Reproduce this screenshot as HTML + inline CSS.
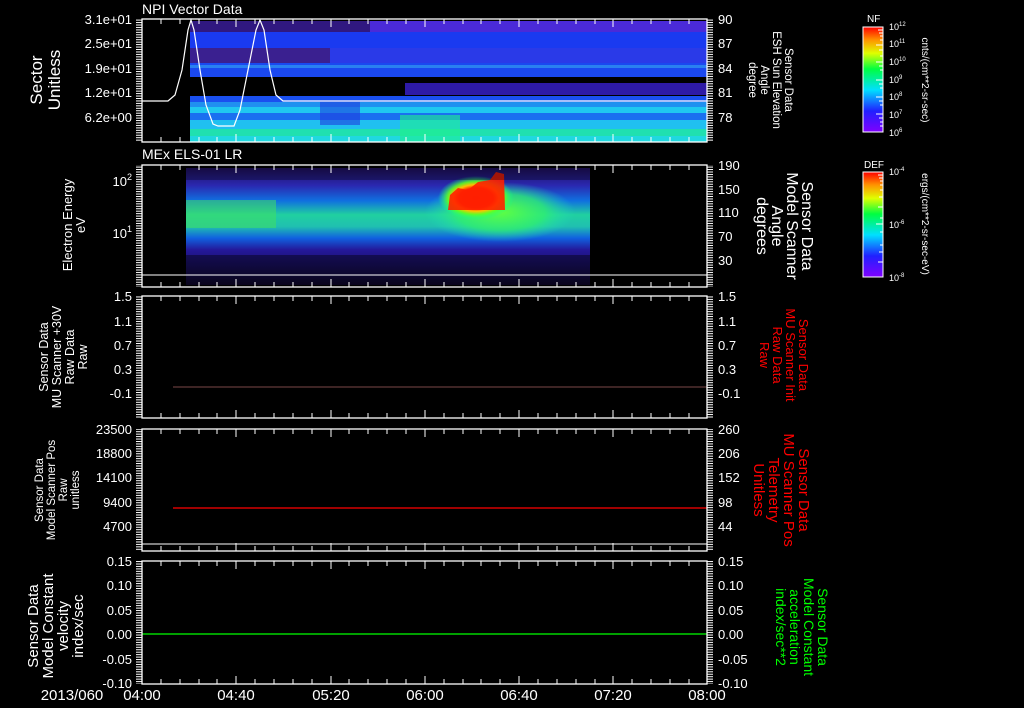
<!DOCTYPE html>
<html><head><meta charset="utf-8"><style>
html,body{margin:0;padding:0;background:#000;}
svg{display:block;font-family:"Liberation Sans",sans-serif;}
</style></head><body>
<svg width="1024" height="708" viewBox="0 0 1024 708" xmlns="http://www.w3.org/2000/svg">
<defs>
<pattern id="mtL" width="6" height="2.45" patternUnits="userSpaceOnUse"><rect x="0" y="0" width="6" height="1" fill="#fff"/></pattern>
<linearGradient id="rainbow" x1="0" y1="1" x2="0" y2="0">
<stop offset="0" stop-color="#8000ff"/><stop offset="0.2" stop-color="#2020ff"/><stop offset="0.4" stop-color="#00e0ff"/><stop offset="0.6" stop-color="#00ff40"/><stop offset="0.75" stop-color="#e0ff00"/><stop offset="0.88" stop-color="#ff9000"/><stop offset="1" stop-color="#ff0000"/>
</linearGradient>
<linearGradient id="p2v" x1="0" y1="0" x2="0" y2="1">
<stop offset="0" stop-color="#201060"/><stop offset="0.15" stop-color="#2a28b0"/><stop offset="0.28" stop-color="#1070e0"/><stop offset="0.4" stop-color="#20d0a0"/><stop offset="0.5" stop-color="#20c0b0"/><stop offset="0.6" stop-color="#1060e0"/><stop offset="0.7" stop-color="#24189a"/><stop offset="1" stop-color="#100830"/>
</linearGradient>
<radialGradient id="hot" cx="0.5" cy="0.5" r="0.5">
<stop offset="0" stop-color="#ff1000"/><stop offset="0.45" stop-color="#ff2000"/><stop offset="0.6" stop-color="#ffc000"/><stop offset="0.75" stop-color="#60ff20" stop-opacity="0.9"/><stop offset="1" stop-color="#00ffa0" stop-opacity="0"/>
</radialGradient>
<radialGradient id="grn" cx="0.5" cy="0.5" r="0.5">
<stop offset="0" stop-color="#60ff40"/><stop offset="0.6" stop-color="#30f070" stop-opacity="0.8"/><stop offset="1" stop-color="#20e0c0" stop-opacity="0"/>
</radialGradient>
</defs>

<!-- Panel 1 spectrogram -->
<g>
<rect x="190" y="21" width="517" height="11" fill="#4a2ad8"/>
<rect x="190" y="21" width="180" height="11" fill="#301880"/>
<rect x="190" y="32" width="517" height="16" fill="#1a3af0"/>
<rect x="190" y="48" width="517" height="15" fill="#2a3ae8"/>
<rect x="190" y="48" width="140" height="15" fill="#3a2090"/>
<rect x="190" y="63" width="517" height="14" fill="#1a48f0"/>
<rect x="190" y="65" width="517" height="3" fill="#2a80f0"/>
<rect x="405" y="83" width="302" height="12" fill="#3a20d0" opacity="0.8"/>
<rect x="190" y="96" width="517" height="6" fill="#1a50f0"/>
<rect x="190" y="102" width="517" height="5" fill="#2090f0"/>
<rect x="190" y="107" width="517" height="6" fill="#20c8f0"/>
<rect x="190" y="113" width="517" height="7" fill="#1a70f0"/>
<rect x="190" y="120" width="517" height="9" fill="#20c0f0"/>
<rect x="190" y="129" width="517" height="7" fill="#20e0b0"/>
<rect x="190" y="136" width="517" height="6" fill="#20d8e0"/>
<rect x="320" y="100" width="40" height="25" fill="#2040e0" opacity="0.6"/>
<rect x="400" y="115" width="60" height="27" fill="#20f090" opacity="0.6"/>
<polyline fill="none" stroke="#fff" stroke-width="1.2" points="142,101 168,101 175,95 182,70 188,30 191,20 194,30 200,70 206,105 213,124 218,126 234,126 240,110 248,70 256,30 260,20 264,30 270,70 276,95 283,101 707,101"/>
</g>

<!-- Panel 2 spectrogram -->
<g>
<rect x="186" y="168" width="404" height="117" fill="url(#p2v)"/>
<rect x="186" y="200" width="90" height="28" fill="#40e060" opacity="0.55"/>
<ellipse cx="500" cy="212" rx="75" ry="30" fill="url(#grn)"/>
<ellipse cx="476" cy="198" rx="38" ry="22" fill="url(#hot)"/>
<polygon points="448,210 450,195 458,188 468,190 478,182 490,180 496,172 504,174 505,210" fill="#ff2000" opacity="0.9"/>
<rect x="186" y="255" width="404" height="30" fill="#000" opacity="0.4"/>
<rect x="186" y="168" width="404" height="12" fill="#000" opacity="0.3"/>
<line x1="142" y1="275" x2="707" y2="275" stroke="#fff" stroke-width="1"/>
</g>

<!-- data lines -->
<line x1="173" y1="387" x2="707" y2="387" stroke="#7a4848" stroke-width="1"/>
<line x1="173" y1="508" x2="707" y2="508" stroke="#ff0000" stroke-width="1.3"/>
<line x1="142" y1="634" x2="707" y2="634" stroke="#00ff00" stroke-width="1.3"/>
<line x1="142" y1="544" x2="707" y2="544" stroke="#fff" stroke-width="1"/>

<!-- frames -->
<g fill="none" stroke="#fff" stroke-width="1.3">
<rect x="142" y="19" width="565" height="123"/>
<rect x="142" y="165" width="565" height="122"/>
<rect x="142" y="296" width="565" height="122"/>
<rect x="142" y="429" width="565" height="122"/>
<rect x="142" y="561" width="565" height="123"/>
</g>
<g>
<rect x="136" y="19" width="6" height="123" fill="url(#mtL)"/>
<rect x="707" y="19" width="6" height="123" fill="url(#mtL)"/>
<rect x="136" y="165" width="6" height="122" fill="url(#mtL)"/>
<rect x="707" y="165" width="6" height="122" fill="url(#mtL)"/>
<rect x="136" y="296" width="6" height="122" fill="url(#mtL)"/>
<rect x="707" y="296" width="6" height="122" fill="url(#mtL)"/>
<rect x="136" y="429" width="6" height="122" fill="url(#mtL)"/>
<rect x="707" y="429" width="6" height="122" fill="url(#mtL)"/>
<rect x="136" y="561" width="6" height="123" fill="url(#mtL)"/>
<rect x="707" y="561" width="6" height="123" fill="url(#mtL)"/>
</g>
<g stroke="#fff" stroke-width="1">
<path d="M161,19v5M180,19v5M199,19v5M217,19v5M236,19v8M255,19v5M274,19v5M293,19v5M312,19v5M331,19v8M349,19v5M368,19v5M387,19v5M406,19v5M425,19v8M444,19v5M463,19v5M481,19v5M500,19v5M519,19v8M538,19v5M557,19v5M576,19v5M595,19v5M613,19v8M632,19v5M651,19v5M670,19v5M689,19v5"/>
<path d="M161,142v-5M180,142v-5M199,142v-5M217,142v-5M236,142v-8M255,142v-5M274,142v-5M293,142v-5M312,142v-5M331,142v-8M349,142v-5M368,142v-5M387,142v-5M406,142v-5M425,142v-8M444,142v-5M463,142v-5M481,142v-5M500,142v-5M519,142v-8M538,142v-5M557,142v-5M576,142v-5M595,142v-5M613,142v-8M632,142v-5M651,142v-5M670,142v-5M689,142v-5"/>
<path transform="translate(0,146)" d="M161,19v5M180,19v5M199,19v5M217,19v5M236,19v8M255,19v5M274,19v5M293,19v5M312,19v5M331,19v8M349,19v5M368,19v5M387,19v5M406,19v5M425,19v8M444,19v5M463,19v5M481,19v5M500,19v5M519,19v8M538,19v5M557,19v5M576,19v5M595,19v5M613,19v8M632,19v5M651,19v5M670,19v5M689,19v5"/>
<path transform="translate(0,145)" d="M161,142v-5M180,142v-5M199,142v-5M217,142v-5M236,142v-8M255,142v-5M274,142v-5M293,142v-5M312,142v-5M331,142v-8M349,142v-5M368,142v-5M387,142v-5M406,142v-5M425,142v-8M444,142v-5M463,142v-5M481,142v-5M500,142v-5M519,142v-8M538,142v-5M557,142v-5M576,142v-5M595,142v-5M613,142v-8M632,142v-5M651,142v-5M670,142v-5M689,142v-5"/>
<path transform="translate(0,277)" d="M161,19v5M180,19v5M199,19v5M217,19v5M236,19v8M255,19v5M274,19v5M293,19v5M312,19v5M331,19v8M349,19v5M368,19v5M387,19v5M406,19v5M425,19v8M444,19v5M463,19v5M481,19v5M500,19v5M519,19v8M538,19v5M557,19v5M576,19v5M595,19v5M613,19v8M632,19v5M651,19v5M670,19v5M689,19v5"/>
<path transform="translate(0,276)" d="M161,142v-5M180,142v-5M199,142v-5M217,142v-5M236,142v-8M255,142v-5M274,142v-5M293,142v-5M312,142v-5M331,142v-8M349,142v-5M368,142v-5M387,142v-5M406,142v-5M425,142v-8M444,142v-5M463,142v-5M481,142v-5M500,142v-5M519,142v-8M538,142v-5M557,142v-5M576,142v-5M595,142v-5M613,142v-8M632,142v-5M651,142v-5M670,142v-5M689,142v-5"/>
<path transform="translate(0,410)" d="M161,19v5M180,19v5M199,19v5M217,19v5M236,19v8M255,19v5M274,19v5M293,19v5M312,19v5M331,19v8M349,19v5M368,19v5M387,19v5M406,19v5M425,19v8M444,19v5M463,19v5M481,19v5M500,19v5M519,19v8M538,19v5M557,19v5M576,19v5M595,19v5M613,19v8M632,19v5M651,19v5M670,19v5M689,19v5"/>
<path transform="translate(0,409)" d="M161,142v-5M180,142v-5M199,142v-5M217,142v-5M236,142v-8M255,142v-5M274,142v-5M293,142v-5M312,142v-5M331,142v-8M349,142v-5M368,142v-5M387,142v-5M406,142v-5M425,142v-8M444,142v-5M463,142v-5M481,142v-5M500,142v-5M519,142v-8M538,142v-5M557,142v-5M576,142v-5M595,142v-5M613,142v-8M632,142v-5M651,142v-5M670,142v-5M689,142v-5"/>
<path transform="translate(0,542)" d="M161,19v5M180,19v5M199,19v5M217,19v5M236,19v8M255,19v5M274,19v5M293,19v5M312,19v5M331,19v8M349,19v5M368,19v5M387,19v5M406,19v5M425,19v8M444,19v5M463,19v5M481,19v5M500,19v5M519,19v8M538,19v5M557,19v5M576,19v5M595,19v5M613,19v8M632,19v5M651,19v5M670,19v5M689,19v5"/>
<path transform="translate(0,542)" d="M161,142v-5M180,142v-5M199,142v-5M217,142v-5M236,142v-8M255,142v-5M274,142v-5M293,142v-5M312,142v-5M331,142v-8M349,142v-5M368,142v-5M387,142v-5M406,142v-5M425,142v-8M444,142v-5M463,142v-5M481,142v-5M500,142v-5M519,142v-8M538,142v-5M557,142v-5M576,142v-5M595,142v-5M613,142v-8M632,142v-5M651,142v-5M670,142v-5M689,142v-5"/>
</g>

<g fill="#fff" font-size="14">
<text x="142" y="14">NPI Vector Data</text>
<text x="142" y="159">MEx ELS-01 LR</text>
</g>

<g fill="#fff" font-size="13" text-anchor="end">
<text x="132" y="24">3.1e+01</text><text x="132" y="48">2.5e+01</text><text x="132" y="73">1.9e+01</text><text x="132" y="97">1.2e+01</text><text x="132" y="122">6.2e+00</text>
<text x="132" y="186">10<tspan font-size="9" dy="-6">2</tspan></text><text x="132" y="238">10<tspan font-size="9" dy="-6">1</tspan></text>
<text x="132" y="301">1.5</text><text x="132" y="326">1.1</text><text x="132" y="350">0.7</text><text x="132" y="374">0.3</text><text x="132" y="398">-0.1</text>
<text x="132" y="434">23500</text><text x="132" y="458">18800</text><text x="132" y="482">14100</text><text x="132" y="507">9400</text><text x="132" y="531">4700</text>
<text x="132" y="566">0.15</text><text x="132" y="590">0.10</text><text x="132" y="615">0.05</text><text x="132" y="639">0.00</text><text x="132" y="664">-0.05</text><text x="132" y="688">-0.10</text>
</g>
<g fill="#fff" font-size="13">
<text x="718" y="24">90</text><text x="718" y="48">87</text><text x="718" y="73">84</text><text x="718" y="97">81</text><text x="718" y="122">78</text>
<text x="718" y="170">190</text><text x="718" y="194">150</text><text x="718" y="217">110</text><text x="718" y="241">70</text><text x="718" y="265">30</text>
<text x="718" y="301">1.5</text><text x="718" y="326">1.1</text><text x="718" y="350">0.7</text><text x="718" y="374">0.3</text><text x="718" y="398">-0.1</text>
<text x="718" y="434">260</text><text x="718" y="458">206</text><text x="718" y="482">152</text><text x="718" y="507">98</text><text x="718" y="531">44</text>
<text x="718" y="566">0.15</text><text x="718" y="590">0.10</text><text x="718" y="615">0.05</text><text x="718" y="639">0.00</text><text x="718" y="664">-0.05</text><text x="718" y="688">-0.10</text>
</g>
<g fill="#fff" font-size="15" text-anchor="middle">
<text x="72" y="700">2013/060</text>
<text x="142" y="700">04:00</text><text x="236" y="700">04:40</text><text x="331" y="700">05:20</text><text x="425" y="700">06:00</text><text x="519" y="700">06:40</text><text x="613" y="700">07:20</text><text x="707" y="700">08:00</text>
</g>

<g fill="#fff" text-anchor="middle">
<text transform="translate(42,80) rotate(-90)" font-size="17"><tspan x="0" dy="0">Sector</tspan><tspan x="0" dy="18">Unitless</tspan></text>
<text transform="translate(72,225) rotate(-90)" font-size="13"><tspan x="0">Electron Energy</tspan><tspan x="0" dy="13">eV</tspan></text>
<text transform="translate(48,357) rotate(-90)" font-size="12.5"><tspan x="0">Sensor Data</tspan><tspan x="0" dy="13">MU Scanner +30V</tspan><tspan x="0" dy="13">Raw Data</tspan><tspan x="0" dy="13">Raw</tspan></text>
<text transform="translate(43,490) rotate(-90)" font-size="11.5"><tspan x="0">Sensor Data</tspan><tspan x="0" dy="12">Model Scanner Pos</tspan><tspan x="0" dy="12">Raw</tspan><tspan x="0" dy="12">unitless</tspan></text>
<text transform="translate(38,626) rotate(-90)" font-size="15"><tspan x="0">Sensor Data</tspan><tspan x="0" dy="15">Model Constant</tspan><tspan x="0" dy="15">velocity</tspan><tspan x="0" dy="15">index/sec</tspan></text>
</g>
<g text-anchor="middle">
<text fill="#fff" transform="translate(785,80) rotate(90)" font-size="11.5"><tspan x="0">Sensor Data</tspan><tspan x="0" dy="12">ESH Sun Elevation</tspan><tspan x="0" dy="12">Angle</tspan><tspan x="0" dy="12">degree</tspan></text>
<text fill="#fff" transform="translate(802,226) rotate(90)" font-size="16"><tspan x="0">Sensor Data</tspan><tspan x="0" dy="15">Model Scanner</tspan><tspan x="0" dy="15">Angle</tspan><tspan x="0" dy="15">degrees</tspan></text>
<text fill="#ff0000" transform="translate(799,355) rotate(90)" font-size="13"><tspan x="0">Sensor Data</tspan><tspan x="0" dy="13">MU Scanner Init</tspan><tspan x="0" dy="13">Raw Data</tspan><tspan x="0" dy="13">Raw</tspan></text>
<text fill="#ff0000" transform="translate(799,490) rotate(90)" font-size="15"><tspan x="0">Sensor Data</tspan><tspan x="0" dy="15">MU Scanner Pos</tspan><tspan x="0" dy="15">Telemetry</tspan><tspan x="0" dy="15">Unitless</tspan></text>
<text fill="#00ff00" transform="translate(818,627) rotate(90)" font-size="14"><tspan x="0">Sensor Data</tspan><tspan x="0" dy="14">Model Constant</tspan><tspan x="0" dy="14">acceleration</tspan><tspan x="0" dy="14">index/sec**2</tspan></text>
</g>

<rect x="863" y="27" width="20" height="105" fill="url(#rainbow)" stroke="#fff" stroke-width="1"/>
<rect x="863" y="172" width="20" height="105" fill="url(#rainbow)" stroke="#fff" stroke-width="1"/>
<g stroke="#fff" stroke-width="1">
<path d="M878,30h5M879,33h4M880,36h3M880,40h3M876,45h7M879,50h4M880,56h3M876,62h7M879,66h4M880,70h3M876,80h7M879,84h4M880,88h3M876,97h7M879,101h4M880,105h3M876,114h7M879,118h4M880,122h3M880,126h3"/>
<path d="M878,175h5M879,178h4M880,181h3M880,185h3M880,190h3M879,197h4M878,207h5M880,218h3M876,224h7M880,232h3M880,245h3M879,252h4M878,262h5"/>
</g>
<g fill="#fff" font-size="9">
<text x="867" y="22" font-size="10">NF</text>
<text x="864" y="168" font-size="10">DEF</text>
<text x="889" y="30">10<tspan dy="-4" font-size="6">12</tspan></text>
<text x="889" y="47">10<tspan dy="-4" font-size="6">11</tspan></text>
<text x="889" y="65">10<tspan dy="-4" font-size="6">10</tspan></text>
<text x="889" y="83">10<tspan dy="-4" font-size="6">9</tspan></text>
<text x="889" y="100">10<tspan dy="-4" font-size="6">8</tspan></text>
<text x="889" y="118">10<tspan dy="-4" font-size="6">7</tspan></text>
<text x="889" y="136">10<tspan dy="-4" font-size="6">6</tspan></text>
<text x="889" y="175">10<tspan dy="-4" font-size="6">-4</tspan></text>
<text x="889" y="228">10<tspan dy="-4" font-size="6">-6</tspan></text>
<text x="889" y="281">10<tspan dy="-4" font-size="6">-8</tspan></text>
<text transform="translate(922,80) rotate(90)" text-anchor="middle" font-size="10">cnts/(cm**2-sr-sec)</text>
<text transform="translate(922,224) rotate(90)" text-anchor="middle" font-size="10">ergs/(cm**2-sr-sec-eV)</text>
</g>
</svg>
</body></html>
